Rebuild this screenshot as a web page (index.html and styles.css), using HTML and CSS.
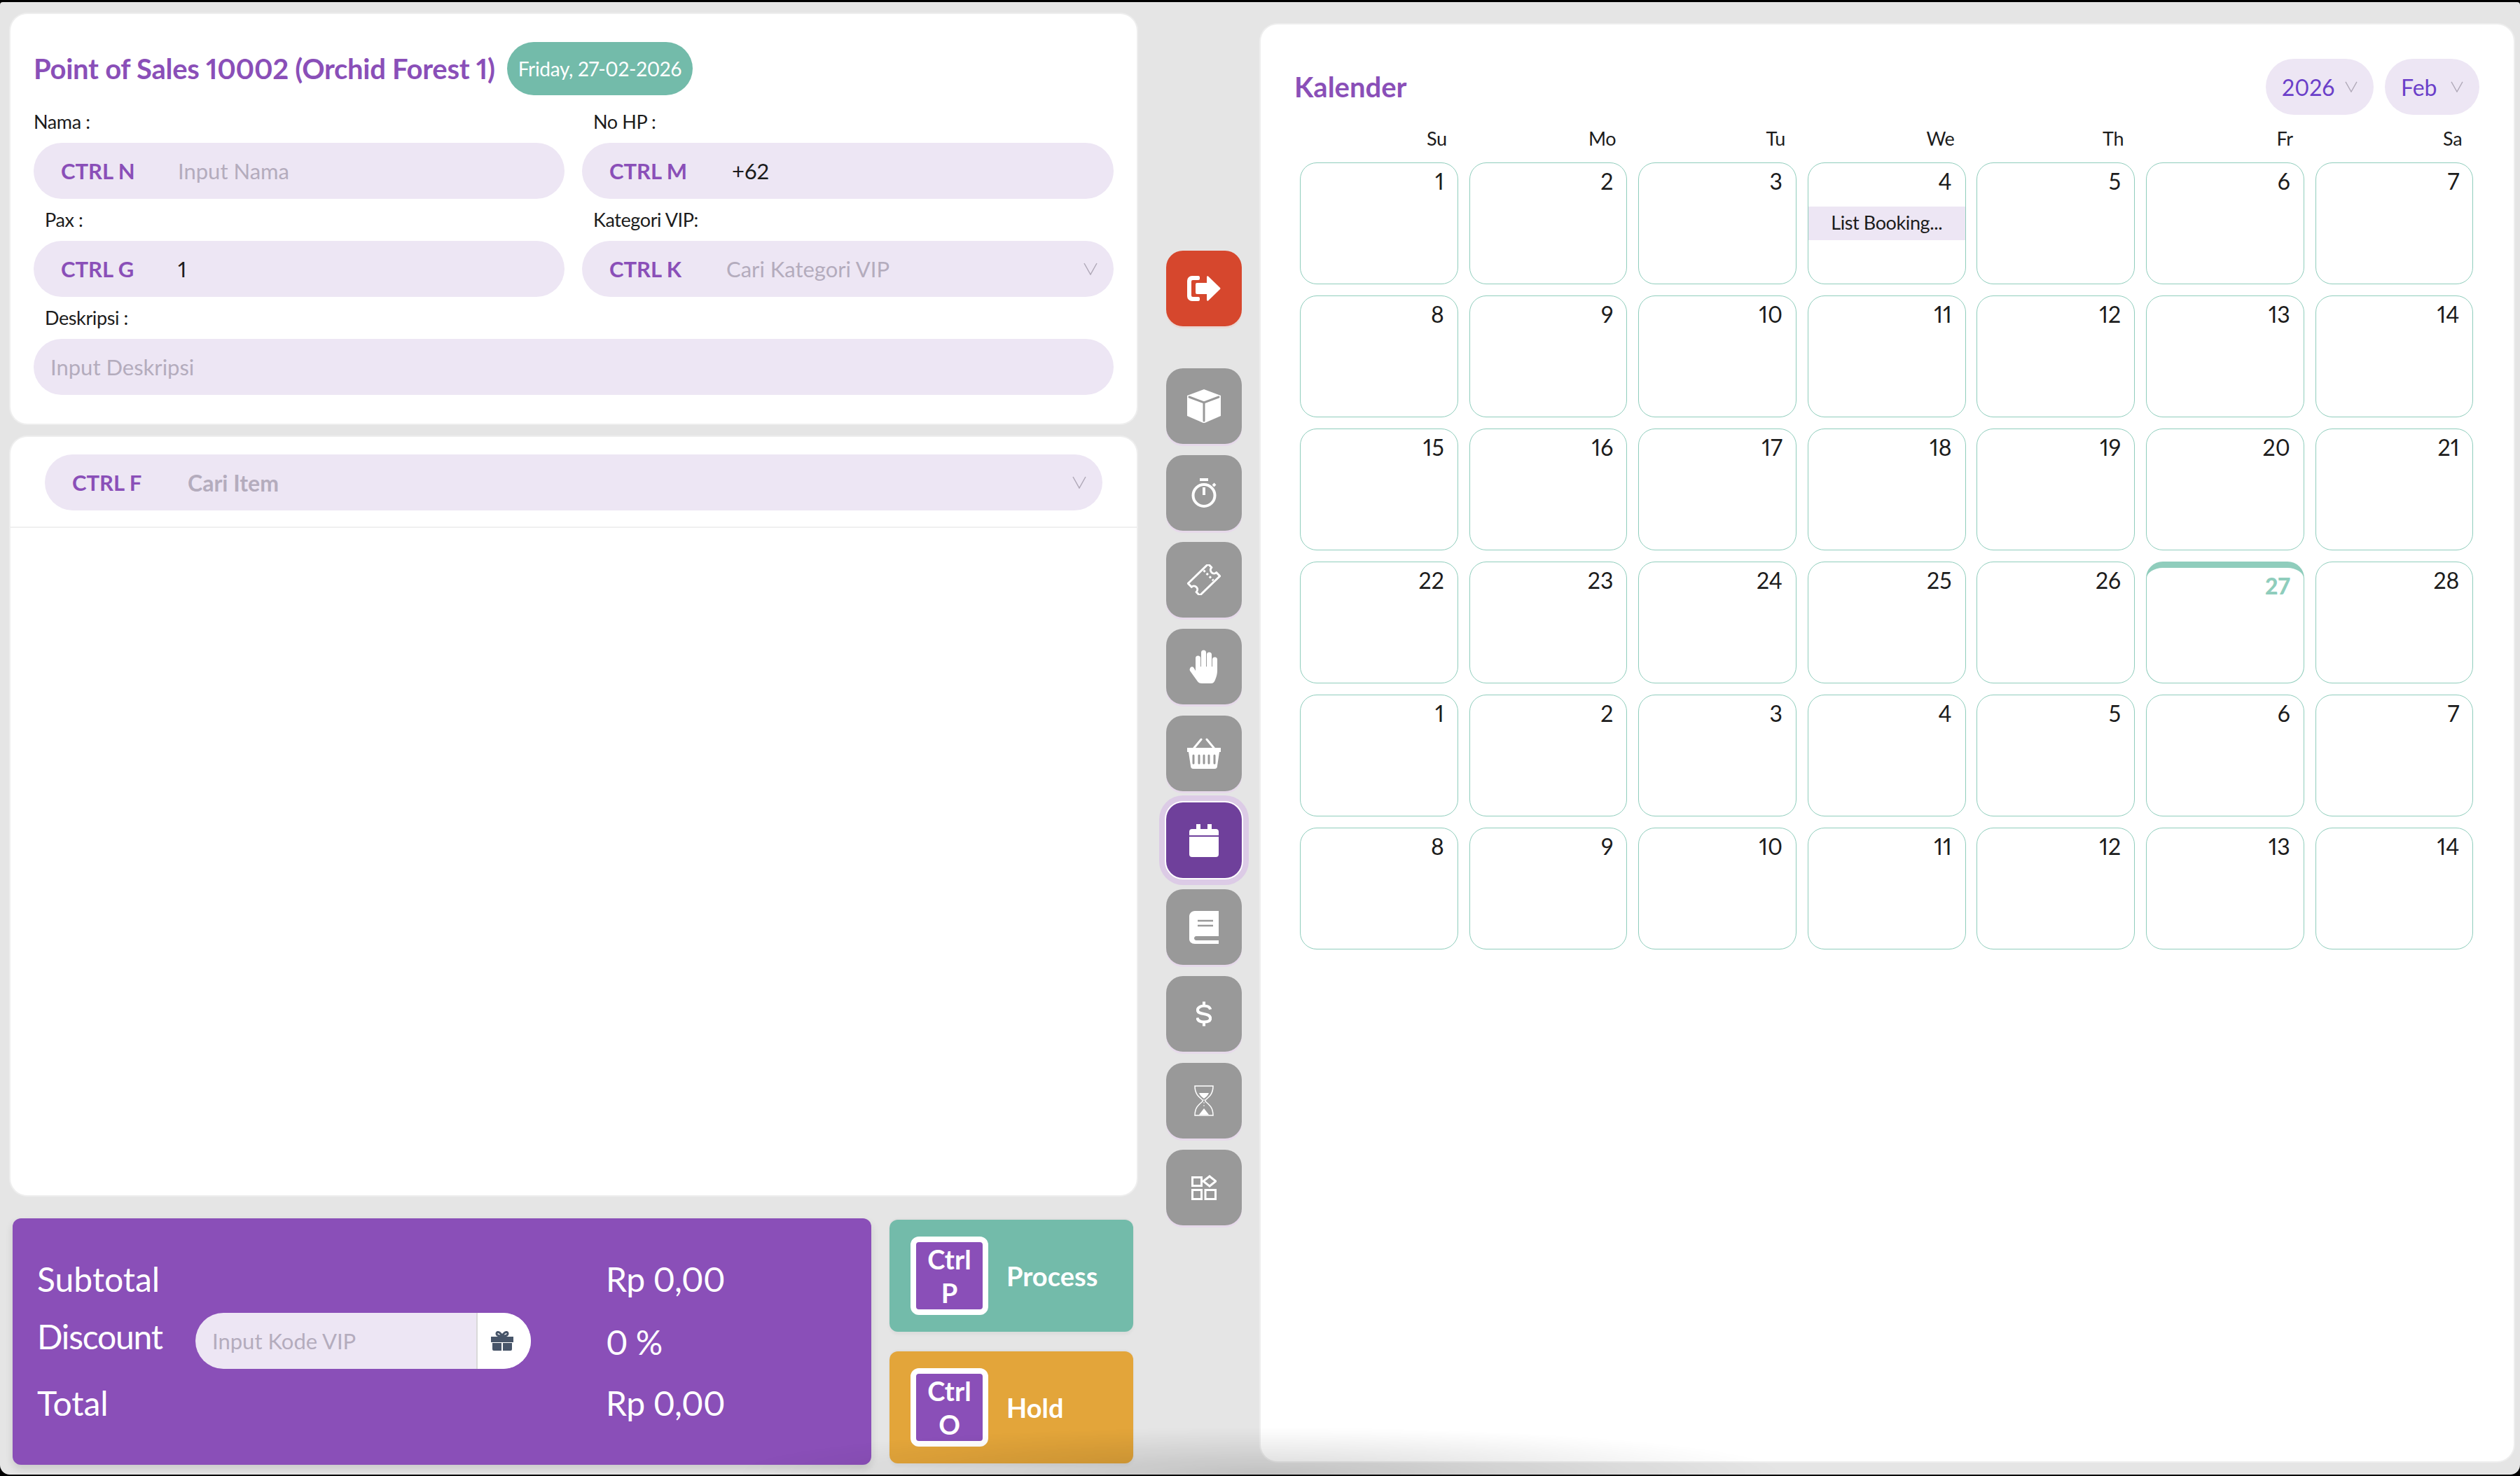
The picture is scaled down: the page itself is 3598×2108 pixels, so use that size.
FILE: index.html
```html
<!DOCTYPE html>
<html lang="id">
<head>
<meta charset="utf-8">
<title>Point of Sales</title>
<link rel="stylesheet" href="styles.css">
</head>
<body>
<div class="app">
  <main class="left">
    <section class="card form-card">
      <div class="title-row">
        <h1 class="title">Point of Sales 10002 (Orchid Forest 1)</h1>
        <span class="date-pill">Friday, 27-02-2026</span>
      </div>
      <div class="form-grid">
        <div class="field">
          <label class="label">Nama :</label>
          <div class="pill"><span class="key">CTRL N</span><span class="ph">Input Nama</span></div>
        </div>
        <div class="field">
          <label class="label ind">No HP :</label>
          <div class="pill"><span class="key">CTRL M</span><span class="val phone">+62</span></div>
        </div>
        <div class="field">
          <label class="label ind">Pax :</label>
          <div class="pill"><span class="key">CTRL G</span><span class="val">1</span></div>
        </div>
        <div class="field">
          <label class="label ind">Kategori VIP:</label>
          <div class="pill"><span class="key">CTRL K</span><span class="ph">Cari Kategori VIP</span>
            <svg class="chev" viewBox="0 0 20 18"><path d="M1 1l9 16 9-16" /></svg></div>
        </div>
        <div class="field wide">
          <label class="label ind">Deskripsi :</label>
          <div class="pill plain"><span class="ph">Input Deskripsi</span></div>
        </div>
      </div>
    </section>

    <section class="card list-card">
      <div class="search-bar">
        <div class="pill search"><span class="key">CTRL F</span><span class="ph strong">Cari Item</span>
          <svg class="chev" viewBox="0 0 20 18"><path d="M1 1l9 16 9-16" /></svg></div>
      </div>
    </section>

    <div class="bottom">
      <section class="totals">
        <div class="tot-row r1"><span class="tot-l">Subtotal</span><span class="tot-v">Rp 0,00</span></div>
        <div class="tot-row r2"><span class="tot-l">Discount</span>
          <div class="vip"><span class="ph">Input Kode VIP</span>
            <span class="gift"><svg viewBox="0 0 32 28" width="32" height="28"><path fill="#475569" d="M0 8h32v8H0zM2 17h13v11H4a2 2 0 0 1-2-2zM17 17h13v9a2 2 0 0 1-2 2H17z"/><path fill="none" stroke="#475569" stroke-width="3" d="M16 7C13 1 8 0 8 3.500S12 7 16 7c4 0 8 0 8-3.500S19 1 16 7z"/></svg></span>
          </div>
          <span class="tot-v pct">0 %</span></div>
        <div class="tot-row r3"><span class="tot-l">Total</span><span class="tot-v">Rp 0,00</span></div>
      </section>
      <div class="actions">
        <button class="act process"><span class="kbd">Ctrl<br>P</span><span class="act-t">Process</span></button>
        <button class="act hold"><span class="kbd">Ctrl<br>O</span><span class="act-t">Hold</span></button>
      </div>
    </div>
  </main>

  <nav class="side">
    <a class="sb red"><svg viewBox="0 0 48 36" width="48" height="36"><path fill="#fff" d="M16 0H7a7 7 0 0 0-7 7v22a7 7 0 0 0 7 7h9a2 2 0 0 0 2-2v-2a2 2 0 0 0-2-2H8a2 2 0 0 1-2-2V8a2 2 0 0 1 2-2h8a2 2 0 0 0 2-2V2a2 2 0 0 0-2-2zM30 .500c-1-.6-2 0-2 1.500V10H14a2 2 0 0 0-2 2v12a2 2 0 0 0 2 2h14v8c0 1.500 1 2.100 2 1.500l17-16.500a1.500 1.500 0 0 0 0-2z"/></svg></a>
    <a class="sb"><svg viewBox="0 0 48 48" width="48" height="48"><path fill="#fff" d="M24 0l24 9v29L25 48h-2L0 38V9z"/><path fill="none" stroke="#999" stroke-width="3" stroke-linecap="round" d="M3 11l21 8 21-8M24 19v26"/></svg></a>
    <a class="sb"><svg viewBox="0 0 36 42" width="36" height="42"><g fill="none" stroke="#fff" stroke-width="4"><circle cx="18" cy="24.500" r="15.500"/><path d="M12 2h12M18 13v11"/><path d="M31 11l3-3"/></g></svg></a>
    <a class="sb"><svg viewBox="0 0 48 44" width="48" height="44"><g transform="translate(24 22) rotate(-44) translate(-20 -12)"><path fill="none" stroke="#fff" stroke-width="3" stroke-linejoin="round" d="M0 0H40V7a5 5 0 0 0 0 10V24H0V17a5 5 0 0 0 0-10Z"/><path fill="none" stroke="#fff" stroke-width="3" stroke-dasharray="3 3" d="M29 2V22"/></g></svg></a>
    <a class="sb"><svg viewBox="0 0 42 48" width="42" height="48"><path fill="#fff" d="M9 12a3.500 3.500 0 0 1 7 0V24h1V4a3.500 3.500 0 0 1 7 0V24h1V7a3.500 3.500 0 0 1 7 0V24h1V14a3.500 3.500 0 0 1 7 0V30c0 4-1 8-3 13c-1 3-3 5-6 5H18c-3 0-5-1-7-4L1 30c-1-2 0-4 1-5s3-1 4 0l3 5Z"/></svg></a>
    <a class="sb"><svg viewBox="0 0 48 44" width="48" height="44"><path fill="#fff" d="M0 14h48v6h-2l-3 20a4 4 0 0 1-4 4H9a4 4 0 0 1-4-4L2 20H0z"/><path fill="none" stroke="#fff" stroke-width="3" stroke-linecap="round" d="M10 14L20 2M38 14L28 2"/><path fill="none" stroke="#999" stroke-width="3" stroke-linecap="round" d="M9 25v11M17 25v11M24 25v11M31 25v11M39 25v11"/></svg></a>
    <a class="sb active"><svg viewBox="0 0 42 47" width="42" height="47"><path fill="#fff" d="M10 0h6v7h10V0h6v7h6a4 4 0 0 1 4 4v5H0v-5a4 4 0 0 1 4-4h6zM0 18h42v25a4 4 0 0 1-4 4H4a4 4 0 0 1-4-4z"/></svg></a>
    <a class="sb"><svg viewBox="0 0 42 47" width="42" height="47"><path fill="#fff" d="M8 0h34v36H10c-4 0-4 6 0 6h32v5H8c-5 0-8-3-8-7V8c0-4 3-8 8-8z"/><path fill="none" stroke="#999" stroke-width="2.500" d="M12 14h22M12 21h22"/></svg></a>
    <a class="sb dollar"><svg viewBox="0 0 24 38" width="22" height="36"><path fill="none" stroke="#fff" stroke-width="4.500" d="M22 12c-1-4-5-5.500-10-5.500S2 9 2 13c0 9 20 3 20 13 0 4-4 5.500-10 5.500S2 29 1.500 25M12 0v7M12 31v7"/></svg></a>
    <a class="sb"><svg viewBox="0 0 28 44" width="28" height="44"><path fill="none" stroke="#fff" stroke-width="1.500" d="M1 1h26c0 11-5 15-11 20v2c6 5 11 9 11 20H1c0-11 5-15 11-20v-2C6 16 1 12 1 1z"/><path fill="#fff" d="M7 11h14c-1 3-4 6-7 8-3-2-6-5-7-8zM14 33l7 9H7z"/><path stroke="#fff" stroke-dasharray="2 2" d="M14 20v12"/></svg></a>
    <a class="sb"><svg viewBox="0 0 36 36" width="36" height="36"><g fill="none" stroke="#fff" stroke-width="3"><path d="M1.500 3.500h13v12h-13zM1.500 21.500h13v13h-13zM20 21.500h14.500v13H20zM26 2l9 7-9 7-9-7z"/></g></svg></a>
  </nav>

  <aside class="card cal">
    <header class="cal-head">
      <h2 class="title cal-title">Kalender</h2>
      <div class="cal-sel">
        <span class="sel y">2026<svg class="chev" viewBox="0 0 20 18"><path d="M1 1l9 16 9-16" /></svg></span>
        <span class="sel m">Feb<svg class="chev" viewBox="0 0 20 18"><path d="M1 1l9 16 9-16" /></svg></span>
      </div>
    </header>
    <div class="dow"><span>Su</span><span>Mo</span><span>Tu</span><span>We</span><span>Th</span><span>Fr</span><span>Sa</span></div>
    <div class="grid">
      <div class="cell">1</div><div class="cell">2</div><div class="cell">3</div><div class="cell">4<div class="evt">List Booking...</div></div><div class="cell">5</div><div class="cell">6</div><div class="cell">7</div>
      <div class="cell">8</div><div class="cell">9</div><div class="cell">10</div><div class="cell">11</div><div class="cell">12</div><div class="cell">13</div><div class="cell">14</div>
      <div class="cell">15</div><div class="cell">16</div><div class="cell">17</div><div class="cell">18</div><div class="cell">19</div><div class="cell">20</div><div class="cell">21</div>
      <div class="cell">22</div><div class="cell">23</div><div class="cell">24</div><div class="cell">25</div><div class="cell">26</div><div class="cell today">27</div><div class="cell">28</div>
      <div class="cell">1</div><div class="cell">2</div><div class="cell">3</div><div class="cell">4</div><div class="cell">5</div><div class="cell">6</div><div class="cell">7</div>
      <div class="cell">8</div><div class="cell">9</div><div class="cell">10</div><div class="cell">11</div><div class="cell">12</div><div class="cell">13</div><div class="cell">14</div>
    </div>
  </aside>
</div>
<div class="glow"></div>
</body>
</html>
```

FILE: styles.css
```css
* { box-sizing: border-box; }
html, body { margin: 0; height: 100%; overflow: hidden; background: #000; }
body { font-family: "Lato", "Liberation Sans", sans-serif; color: #1c1c1c; font-size: 28px; padding: 3px 0 2px; font-feature-settings: "pnum"; }
.app { height: 2103px; background: #e5e5e5; border-radius: 4px 4px 14px 14px; display: flex; align-items: flex-start; padding: 17px 9px 0 15px; position: relative; }
.card { background: #fff; border-radius: 24px; box-shadow: 0 0 0 2px #eee; }
.left { width: 1608px; flex: none; display: flex; flex-direction: column; }
.form-card { height: 585px; padding: 40px 33px 0; }
.title-row { display: flex; align-items: center; gap: 17px; height: 76px; }
.title { margin: 0; color: #8a4fb8; font-size: 40px; font-weight: 700; letter-spacing: -.28px; white-space: nowrap; line-height: 1; }
.date-pill { background: #73bbaa; color: #fff; border-radius: 38px; height: 76px; display: flex; align-items: center; padding: 0 16px; font-size: 28px; letter-spacing: -.3px; white-space: nowrap; }
.form-grid { display: grid; grid-template-columns: 758px 759px; column-gap: 25px; margin-top: 8px; }
.field { display: flex; flex-direction: column; }
.wide { grid-column: 1 / 3; }
.label { height: 60px; line-height: 60px; font-size: 27px; letter-spacing: -.4px; }
.ind { padding-left: 16px; }
.pill { height: 80px; border-radius: 40px; background: #ede6f4; display: flex; align-items: center; padding: 0 23px 0 39px; font-size: 31px; }
.plain { padding-left: 24px; }
.key { width: 167px; flex: none; color: #8a4fb8; font-weight: 700; font-size: 31px; white-space: nowrap; letter-spacing: 0; }
.ph { color: #b4acbd; white-space: nowrap; }
.ph.strong { font-weight: 700; font-size: 32px; margin-left: -2px; }
.val { color: #1c1c1c; }
.val.phone { margin-left: 8px; }
.chev { width: 20px; height: 18px; fill: none; stroke: #b0a9b8; stroke-width: 1.500; margin-left: auto; flex: none; }
.list-card { height: 1083px; margin-top: 19px; }
.search-bar { height: 130px; padding: 25px 49px 0 49px; border-bottom: 2px solid #f0f0f0; }
.search { height: 80px; }
.bottom { display: flex; margin-top: 33px; gap: 26px; margin-left: 3px; }
.totals { width: 1226px; height: 352px; background: #8a4fb8; border-radius: 12px; color: #fff; position: relative; box-shadow: 0 6px 12px rgba(0,0,0,.12); }
.tot-row { position: absolute; left: 35px; right: 0; display: flex; align-items: center; height: 60px; font-size: 48px; }
.tot-l { width: 226px; flex: none; }
.r2 .tot-l { letter-spacing: -1.2px; }
.tot-v { position: absolute; left: 812px; letter-spacing: -.5px; white-space: nowrap; }
.r1 { top: 56px; }
.r2 { top: 138px; }
.r3 { top: 233px; }
.pct { top: 10px; }
.vip { width: 479px; height: 80px; border-radius: 40px; background: #ede6f4; display: flex; align-items: center; padding-left: 24px; font-size: 31px; overflow: hidden; position: relative; top: 7px; letter-spacing: 0; }
.gift { margin-left: auto; width: 78px; height: 80px; background: #fff; border-left: 2px solid #d9d9d9; display: flex; align-items: center; justify-content: center; padding-right: 6px; }
.actions { display: flex; flex-direction: column; gap: 28px; padding-top: 2px; }
.act { width: 348px; height: 160px; border: 0; border-radius: 12px; display: flex; align-items: center; padding: 0 0 0 30px; color: #fff; font: inherit; font-weight: 700; box-shadow: 0 4px 4px rgba(0,0,0,.04), 0 -2px 2px rgba(0,0,0,.03); }
.process { background: #73bbaa; }
.hold { background: #e3a53a; }
.kbd { width: 111px; height: 112px; border: 8px solid #fff; border-radius: 12px; background: #8a4fb8; font-size: 38px; line-height: 48px; text-align: center; font-weight: 700; flex: none; }
.act-t { margin-left: 26px; font-size: 38px; }
.side { width: 108px; flex: none; margin-left: 42px; display: flex; flex-direction: column; gap: 16px; padding-top: 338px; }
.sb { width: 108px; height: 108px; border-radius: 24px; background: #999; display: flex; align-items: center; justify-content: center; box-shadow: 0 3px 0 #e6d9ea; }
.red { background: #d6472d; box-shadow: 0 3px 0 #e8d7d4; margin-bottom: 44px; }
.active { background: #6f409b; box-shadow: 0 0 0 2px #fff, 0 0 0 10px #dccbe6; }
.cal { width: 1789px; height: 2052px; margin-left: 27px; margin-top: 15px; padding: 49px 49px 0 48px; }
.cal-head { display: flex; align-items: center; justify-content: space-between; height: 80px; }
.cal-title { letter-spacing: 0; }
.cal-sel { display: flex; gap: 16px; }
.sel { height: 80px; border-radius: 40px; background: #ede6f4; color: #6b3fc9; font-size: 32px; display: flex; align-items: center; padding: 0 23px; }
.sel.y { width: 154px; }
.sel.m { width: 135px; }
.sel .chev { width: 18px; height: 16px; }
.dow { display: grid; grid-template-columns: repeat(7, 225.800px); column-gap: 15.800px; margin: 12px 0 0 8px; height: 56px; line-height: 44px; text-align: right; font-size: 27px; letter-spacing: -.3px; }
.dow span { padding-right: 16px; }
.grid { display: grid; grid-template-columns: repeat(7, 225.800px); grid-auto-rows: 174px; gap: 16px 15.800px; margin-left: 8px; }
.cell { border: 1.500px solid #8fcdbc; border-radius: 24px; text-align: right; padding: 4px 19px 0; font-size: 32px; line-height: 44px; overflow: hidden; }
.today { border-top: 9px solid #8fcdbc; color: #8fcdbc; font-weight: 900; padding-top: 4px; }
.evt { background: #ede6f4; height: 48px; line-height: 46px; margin: 14px -19px 0; text-align: center; font-size: 27px; letter-spacing: -.4px; }
.glow { position: fixed; left: 1050px; right: 1050px; bottom: -60px; height: 130px; background: radial-gradient(closest-side, rgba(0,0,0,.15), rgba(0,0,0,.02) 85%, rgba(0,0,0,0)); pointer-events: none; }
```
